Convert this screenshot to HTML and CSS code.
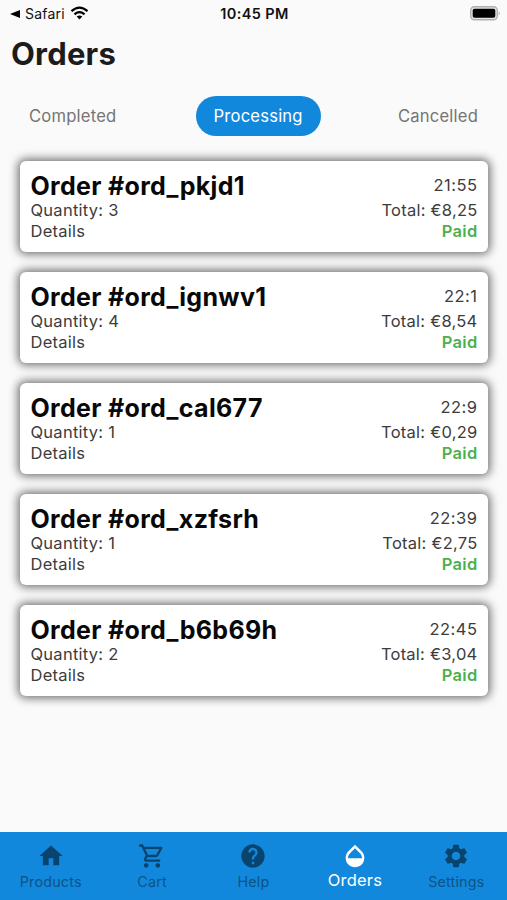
FILE: index.html
```html
<!DOCTYPE html>
<html lang="en">
<head>
<meta charset="utf-8">
<title>Orders</title>
<link rel="stylesheet" href="styles.css">
</head>
<body>
<div class="app">
  <header class="status">
    <div class="status-left">
      <svg class="back" viewBox="0 0 10 8"><path d="M0 4 10 0V8Z"/></svg>
      <span class="carrier">Safari</span>
      <svg class="wifi" viewBox="0 0 18 14"><path d="M1 5.2Q9-2 17 5.2M4 8.3Q9 4 14 8.3" fill="none" stroke="#000" stroke-width="2.3"/><path d="M6.2 10.6Q9 8.3 11.8 10.6L9 13.6Z"/></svg>
    </div>
    <div class="clock">10:45 PM</div>
    <svg class="battery" viewBox="0 0 31 15"><rect x=".7" y=".7" width="26.6" height="13.1" rx="3.8" fill="#e4e4e4" stroke="#b0b0b0" stroke-width="1.4"/><rect x="2.7" y="2.7" width="22.6" height="9.1" rx="1.8"/><path d="M28.7 4.9Q31 7.2 28.7 9.5Z" fill="#b0b0b0"/></svg>
  </header>
  <h1>Orders</h1>
  <nav class="tabs">
    <span class="tab">Completed</span>
    <span class="tab active">Processing</span>
    <span class="tab">Cancelled</span>
  </nav>
  <main class="orders">
    <article class="card"><div class="row head"><h2>Order #ord_pkjd1</h2><span>21:55</span></div><div class="row"><span>Quantity: 3</span><span>Total: €8,25</span></div><div class="row"><span>Details</span><b>Paid</b></div></article>
    <article class="card"><div class="row head"><h2>Order #ord_ignwv1</h2><span>22:1</span></div><div class="row"><span>Quantity: 4</span><span>Total: €8,54</span></div><div class="row"><span>Details</span><b>Paid</b></div></article>
    <article class="card"><div class="row head"><h2>Order #ord_cal677</h2><span>22:9</span></div><div class="row"><span>Quantity: 1</span><span>Total: €0,29</span></div><div class="row"><span>Details</span><b>Paid</b></div></article>
    <article class="card"><div class="row head"><h2>Order #ord_xzfsrh</h2><span>22:39</span></div><div class="row"><span>Quantity: 1</span><span>Total: €2,75</span></div><div class="row"><span>Details</span><b>Paid</b></div></article>
    <article class="card"><div class="row head"><h2>Order #ord_b6b69h</h2><span>22:45</span></div><div class="row"><span>Quantity: 2</span><span>Total: €3,04</span></div><div class="row"><span>Details</span><b>Paid</b></div></article>
  </main>
  <nav class="bottom">
    <div class="item"><svg viewBox="0 0 24 24"><path d="M10 20v-6h4v6h5v-8h3L12 3 2 12h3v8z"/></svg><span>Products</span></div>
    <div class="item"><svg viewBox="0 0 24 24"><path d="M15.55 13c.75 0 1.41-.41 1.75-1.03l3.58-6.49A.996.996 0 0 0 20.01 4H5.21l-.94-2H1v2h2l3.6 7.59-1.35 2.44C4.52 15.37 5.48 17 7 17h12v-2H7l1.1-2h7.45zM6.16 6h12.15l-2.76 5H8.53L6.16 6zM7 18c-1.1 0-1.99.9-1.99 2S5.900 22 7 22s2-.9 2-2-.9-2-2-2zm10 0c-1.1 0-1.99.9-1.99 2s.89 2 1.99 2 2-.9 2-2-.9-2-2-2z"/></svg><span>Cart</span></div>
    <div class="item"><svg viewBox="0 0 24 24"><path d="M12 2C6.480 2 2 6.480 2 12s4.480 10 10 10 10-4.480 10-10S17.520 2 12 2zm1 17h-2v-2h2v2zm2.070-7.750-.9.920C13.450 12.900 13 13.500 13 15h-2v-.5c0-1.100.450-2.100 1.170-2.830l1.240-1.260c.370-.360.590-.860.590-1.410 0-1.100-.9-2-2-2s-2 .9-2 2H8c0-2.210 1.790-4 4-4s4 1.790 4 4c0 .880-.360 1.680-.930 2.250z"/></svg><span>Help</span></div>
    <div class="item selected"><svg viewBox="0 0 24 24"><path d="M17.660 8 12 2.350 6.340 8C4.780 9.560 4 11.640 4 13.640s.780 4.110 2.340 5.670 3.610 2.350 5.660 2.350 4.100-.790 5.660-2.350S20 15.640 20 13.640 19.220 9.560 17.660 8zM6 14c.010-2 .620-3.270 1.760-4.400L12 5.270l4.240 4.380C17.380 10.770 17.990 12 18 14H6z"/></svg><span>Orders</span></div>
    <div class="item"><svg viewBox="0 0 24 24"><path d="M19.140 12.940c.040-.3.060-.61.060-.94 0-.32-.02-.64-.07-.94l2.030-1.580c.18-.14.23-.41.12-.61l-1.920-3.320c-.12-.22-.37-.29-.59-.22l-2.390.96c-.5-.38-1.030-.7-1.620-.94l-.36-2.540c-.04-.24-.24-.41-.48-.41h-3.840c-.24 0-.43.17-.47.41l-.36 2.540c-.59.24-1.130.57-1.620.94l-2.390-.96c-.22-.08-.47 0-.59.22L2.740 8.870c-.12.21-.08.47.12.61l2.030 1.580c-.05.3-.09.63-.09.94s.02.64.07.94l-2.030 1.580c-.18.14-.23.41-.12.61l1.920 3.320c.12.22.37.29.59.22l2.390-.96c.5.38 1.030.7 1.620.94l.36 2.540c.05.24.24.41.48.41h3.840c.24 0 .44-.17.47-.41l.36-2.540c.59-.24 1.130-.56 1.620-.94l2.390.96c.22.08.47 0 .59-.22l1.920-3.320c.12-.22.07-.47-.12-.61l-2.010-1.580zM12 15.600c-1.980 0-3.600-1.620-3.600-3.600s1.620-3.600 3.600-3.600 3.600 1.620 3.600 3.600-1.620 3.600-3.600 3.600z"/></svg><span>Settings</span></div>
  </nav>
</div>
</body>
</html>
```
FILE: styles.css
```css
* { box-sizing: border-box; }
body { margin: 0; background: #fafafa; font-family: Inter, "Liberation Sans", sans-serif; color: #3c3c3c; }
.app { height: 900px; display: flex; flex-direction: column; overflow: hidden; }
.status { height: 27px; padding: 0 6px 0 10px; display: grid; grid-template-columns: 1fr auto 1fr; align-items: center; color: #111; font-size: 14px; }
.status-left { display: flex; align-items: center; }
.back { width: 10px; height: 8px; }
.carrier { margin-left: 5px; letter-spacing: .2px; }
.wifi { width: 19px; height: 14px; margin-left: 5px; margin-top: -2px; }
.clock { font-weight: 600; font-size: 14.500px; letter-spacing: .35px; margin-right: 2px; }
.battery { width: 31px; height: 15px; justify-self: end; }
h1 { margin: 7px 0 0 11px; font-size: 31px; line-height: 40px; font-weight: 700; letter-spacing: .2px; color: #1c1c1c; }
.tabs { margin-top: 22px; padding: 0 11px; height: 40px; display: flex; justify-content: space-between; }
.tab { padding: 0 18px; line-height: 40px; border-radius: 20px; font-size: 16.600px; letter-spacing: .2px; color: #757575; }
.active { background: #1288dc; color: #fff; position: relative; left: 1px; }
.orders { margin: 25px 19px 0 20px; display: flex; flex-direction: column; gap: 20.600px; }
.card { height: 90.500px; padding: 10px 10.500px 0 10.500px; background: #fff; border-radius: 6px; box-shadow: 0 0 10px 1.500px #6b6b6b; }
.row { display: flex; justify-content: space-between; height: 20.700px; line-height: 20.700px; font-size: 16.500px; letter-spacing: .25px; }
.head { height: 29px; line-height: 29px; }
h2 { margin: 0; line-height: 30px; font-size: 25px; font-weight: 700; letter-spacing: .32px; color: #080808; }
.head span { letter-spacing: .5px; }
b { color: #4caf50; font-weight: 600; letter-spacing: .3px; }
.bottom { margin-top: auto; height: 68.500px; background: #1288dc; display: grid; grid-template-columns: repeat(5, 1fr); color: #0b5488; }
.item { display: flex; flex-direction: column; align-items: center; padding-top: 10.500px; font-size: 14.300px; letter-spacing: .2px; }
.item svg { width: 28px; height: 28px; fill: #09446e; }
.item span { line-height: 20px; margin-top: 2px; }
.selected { color: #fff; font-size: 16.500px; }
.selected svg { fill: #fff; }
.selected span { margin-top: 0; }
```
